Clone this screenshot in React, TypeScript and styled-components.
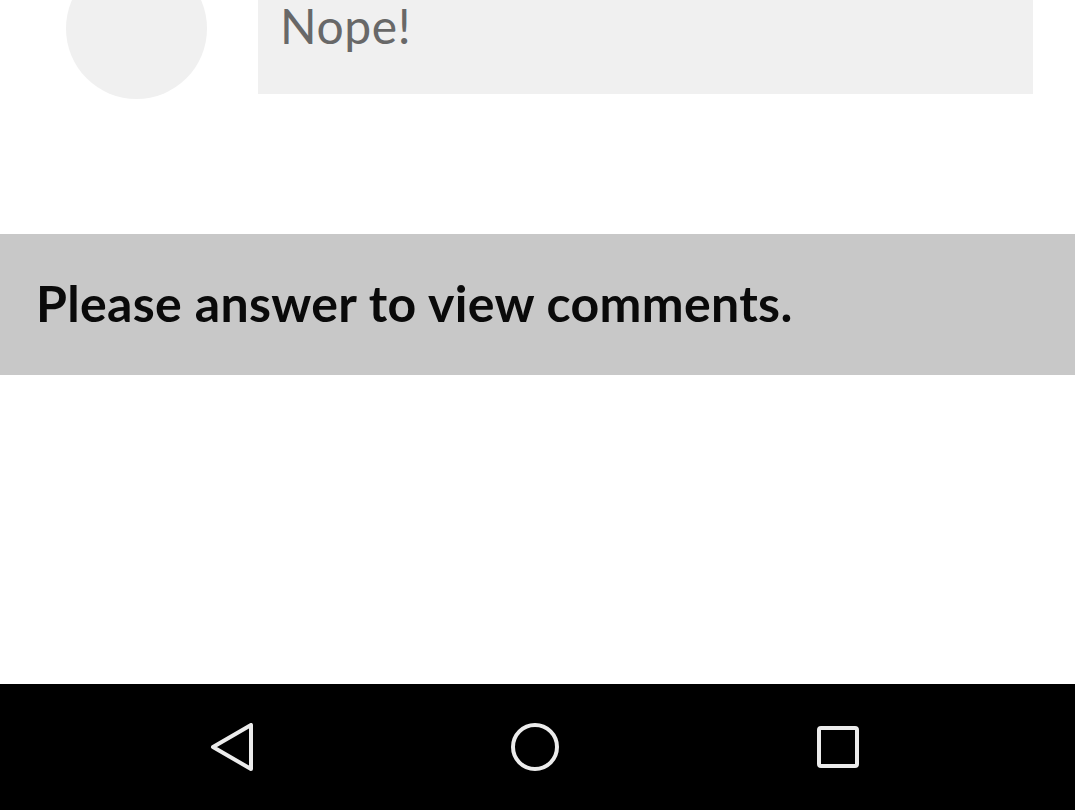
import React from "react";
import styled, { createGlobalStyle } from "styled-components";

const Global = createGlobalStyle`
  html, body { margin: 0; padding: 0; background: #ffffff; }
  body { font-family: "Lato", "Open Sans", sans-serif; overflow: hidden; }
`;

const Page = styled.div`
  width: 1075px;
  height: 810px;
  display: flex;
  flex-direction: column;
  overflow: hidden;
  background: #ffffff;
`;

const CommentRow = styled.div`
  display: flex;
  align-items: flex-start;
  gap: 51px;
  padding: 0 42px 0 66px;
  margin-top: -42px;
`;

const Avatar = styled.div`
  flex: none;
  width: 141px;
  height: 141px;
  border-radius: 50%;
  background: #f0f0f0;
`;

const Bubble = styled.div`
  flex: 1;
  height: 136px;
  box-sizing: border-box;
  padding: 39px 0 0 22px;
  background: #f0f0f0;
`;

const BubbleText = styled.div`
  font-family: "Lato", sans-serif;
  font-weight: 400;
  font-size: 48px;
  letter-spacing: 0.6px;
  line-height: 1.2;
  color: #686868;
`;

const Spacer = styled.div`
  height: 135px;
  flex: none;
`;

const Banner = styled.div`
  height: 141px;
  flex: none;
  box-sizing: border-box;
  display: flex;
  align-items: center;
  padding: 0 0 4px 36px;
  background: #c8c8c8;
`;

const BannerText = styled.div`
  font-family: "Lato", sans-serif;
  font-weight: 700;
  font-size: 50px;
  letter-spacing: 0.35px;
  line-height: 1.2;
  color: #0a0a0a;
`;

const Fill = styled.div`
  flex: 1;
`;

const NavBar = styled.div`
  height: 126px;
  flex: none;
  box-sizing: border-box;
  padding-right: 6px;
  background: #000000;
  display: flex;
  align-items: center;
  justify-content: center;
  gap: 255px;
`;

const NavIcon = styled.svg`
  width: 48px;
  height: 48px;
  display: block;
  fill: none;
  stroke: #ececec;
  stroke-width: 4;
  stroke-linejoin: round;
  stroke-linecap: round;
`;

export default function App() {
  return (
    <>
      <Global />
      <Page>
        <CommentRow>
          <Avatar />
          <Bubble>
            <BubbleText>Nope!</BubbleText>
          </Bubble>
        </CommentRow>
        <Spacer />
        <Banner>
          <BannerText>Please answer to view comments.</BannerText>
        </Banner>
        <Fill />
        <NavBar>
          <NavIcon viewBox="0 0 48 48">
            <polygon points="43,2 43,46 5,24" />
          </NavIcon>
          <NavIcon viewBox="0 0 48 48">
            <circle cx="24" cy="24" r="22" />
          </NavIcon>
          <NavIcon viewBox="0 0 48 48">
            <rect x="5" y="5" width="38" height="38" rx="2" />
          </NavIcon>
        </NavBar>
      </Page>
    </>
  );
}
